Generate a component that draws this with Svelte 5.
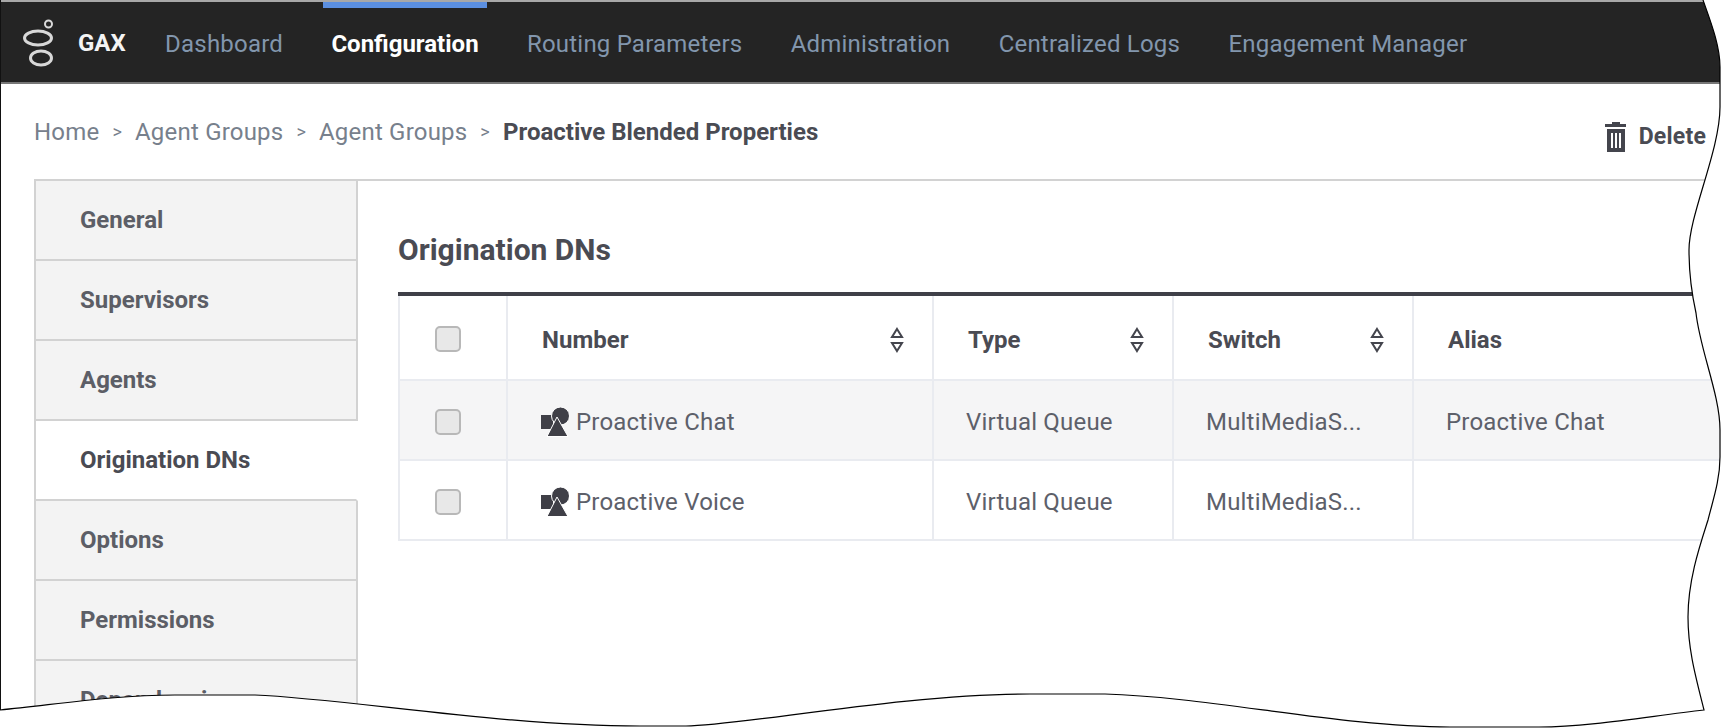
<script>
	const navItems = ['Dashboard', 'Configuration', 'Routing Parameters', 'Administration', 'Centralized Logs', 'Engagement Manager'];
	const tabs = ['General', 'Supervisors', 'Agents', 'Origination DNs', 'Options', 'Permissions', 'Dependencies'];
	const rows = [
		{ name: 'Proactive Chat', type: 'Virtual Queue', sw: 'MultiMediaS...', alias: 'Proactive Chat' },
		{ name: 'Proactive Voice', type: 'Virtual Queue', sw: 'MultiMediaS...', alias: '' },
	];
	const crumbs = ['Home', 'Agent Groups', 'Agent Groups'];

	// torn-paper edge of the screenshot
	const edge = 'M0 710 C60 704 115 695 175 695 L255 695 C350 699 500 726 640 726 L686 726 C740 726 900 694 1030 694 L1105 694 C1210 697 1340 727 1450 727 L1539 727 C1590 727 1650 716 1704 710 C1696 678 1688 650 1688 617 C1688 580 1700 545 1708 520 C1713 500 1720 480 1720 457 L1720 430 C1720 395 1700 350 1696 313 C1692 295 1689 275 1689 250 C1689 215 1720 150 1720 107 L1720 67 C1720 45 1710 20 1703 0';
	const outside = edge + ' L1722 0 L1722 728 L0 728 Z';
</script>

<div class="page">
	<header class="topbar">
		<svg class="logo" width="32" height="48" viewBox="0 0 32 48" fill="none" stroke="#d8d8d8" stroke-width="3">
			<circle cx="25.5" cy="5" r="3.5" stroke-width="2" />
			<ellipse cx="15" cy="19" rx="13.5" ry="7" />
			<ellipse cx="18" cy="39" rx="10.5" ry="7" />
		</svg>
		<span class="brand">GAX</span>
		<nav class="nav">
			{#each navItems as item}
				<a class="nav-item" class:active={item === 'Configuration'}>{item}</a>
			{/each}
		</nav>
	</header>

	<div class="crumb-row">
		<div class="crumbs">
			{#each crumbs as c}
				<span>{c}</span><span class="sep">&gt;</span>
			{/each}
			<b>Proactive Blended Properties</b>
		</div>
		<div class="delete">
			<svg width="22" height="30" viewBox="0 0 22 30">
				<path fill="#44454d" d="M7 0h8v2h6v3H0V2h7zM2 7h18v23H2zM6 11v15h2V11zM10 11v15h2V11zM14 11v15h2V11z" fill-rule="evenodd" />
			</svg>
			<span>Delete</span>
		</div>
	</div>

	<div class="panel">
		<aside class="tabs">
			{#each tabs as t}
				<div class="tab" class:current={t === 'Origination DNs'}>{t}</div>
			{/each}
		</aside>
		<section class="content">
			<h2>Origination DNs</h2>
			<div class="grid head">
				<div class="cell check"><span class="box"></span></div>
				{#each ['Number', 'Type', 'Switch'] as h}
					<div class="cell th">
						{h}
						<svg class="sort" width="14" height="26" viewBox="0 0 14 26" fill="none" stroke="#44454d" stroke-width="2">
							<path d="M7 2L12 10H2Z" /><path d="M7 24L12 16H2Z" />
						</svg>
					</div>
				{/each}
				<div class="cell th">Alias</div>
			</div>
			{#each rows as r, i}
				<div class="grid row" class:odd={i === 0}>
					<div class="cell check"><span class="box"></span></div>
					<div class="cell name">
						<svg width="28" height="30" viewBox="0 0 28 30">
							<rect x="0" y="8" width="12" height="14" fill="#3f3f47" />
							<circle cx="19.5" cy="9" r="9" fill="#3f3f47" stroke="#fff" stroke-width="1" />
							<path d="M16 10L27 29.5H6Z" fill="#3f3f47" stroke="#fff" stroke-width="1" />
						</svg>
						{r.name}
					</div>
					<div class="cell">{r.type}</div>
					<div class="cell">{r.sw}</div>
					<div class="cell">{r.alias}</div>
				</div>
			{/each}
		</section>
	</div>
</div>

<svg class="torn" width="1722" height="728" viewBox="0 0 1722 728">
	<path d={outside} fill="#fff" />
	<path d={edge} fill="none" stroke="#000" stroke-width="1.2" />
</svg>

<style>
	:global(body) {
		margin: 0;
		background: #fff;
	}

	.page {
		width: 1722px;
		height: 728px;
		overflow: hidden;
		box-sizing: border-box;
		border-left: 1px solid #111;
		font-family: Roboto, 'Liberation Sans', sans-serif;
		font-size: 24px;
		letter-spacing: 0.2px;
		color: #555760;
		background: #fff;
	}

	.topbar {
		height: 84px;
		box-sizing: border-box;
		border-top: 2px solid #a8a8a8;
		border-bottom: 2px solid #777;
		background: #242424;
		display: flex;
		align-items: center;
		padding-left: 22px;
	}

	.logo {
		margin-top: 1px;
	}

	.brand {
		margin-left: 23px;
		margin-top: 2px;
		font-weight: 700;
		letter-spacing: 0;
		color: #f4f4f4;
	}

	.nav {
		display: flex;
		align-self: stretch;
		margin-left: 15px;
	}

	.nav-item {
		display: flex;
		align-items: center;
		margin: 0 16px 0 16.4px;
		padding: 0 8px 2px;
		color: #8296ad;
		border-top: 6px solid transparent;
	}

	.nav-item.active {
		color: #fff;
		font-weight: 700;
		letter-spacing: 0;
		border-top-color: #5b8fe0;
	}

	.crumb-row {
		height: 95px;
		box-sizing: border-box;
		display: flex;
		justify-content: space-between;
		align-items: center;
		padding-left: 33px;
	}

	.crumbs {
		display: flex;
		align-items: center;
		color: #77808c;
	}

	.crumbs .sep {
		margin: 0 13px;
		font-size: 18px;
	}

	.crumbs b {
		color: #4a4b53;
		font-weight: 700;
		letter-spacing: 0;
	}

	.delete {
		display: flex;
		align-items: center;
		gap: 12px;
		font-size: 23px;
		font-weight: 700;
		color: #4a4b53;
		margin: 10px 16px 0 0;
		white-space: nowrap;
	}

	.panel {
		display: flex;
		margin-left: 33px;
		border-top: 2px solid #d2d2d2;
	}

	.tabs {
		width: 324px;
		flex: none;
		box-sizing: border-box;
	}

	.tab {
		height: 80px;
		box-sizing: border-box;
		display: flex;
		align-items: center;
		padding-left: 44px;
		font-weight: 700;
		letter-spacing: 0;
		color: #5c5e66;
		background: #f3f3f3;
		border: 2px solid #d2d2d2;
		border-top: 0;
	}

	.tab.current {
		background: #fff;
		color: #4a4b53;
		border-right-color: #fff;
	}

	.content {
		flex: 1;
		padding-left: 40px;
	}

	h2 {
		margin: 0;
		height: 115px;
		box-sizing: border-box;
		padding-top: 51px;
		font-size: 30px;
		line-height: 36px;
		font-weight: 700;
		letter-spacing: 0;
		color: #4a4b53;
		border-bottom: 4px solid #3f4048;
	}

	.grid {
		display: grid;
		box-sizing: border-box;
		grid-template-columns: 108px 426px 240px 240px 1fr;
		border-bottom: 2px solid #e9ebf0;
		border-left: 2px solid #e9ebf0;
	}

	.head {
		height: 85px;
	}

	.row {
		height: 80px;
	}

	.odd {
		background: #f5f5f6;
	}

	.cell {
		display: flex;
		align-items: center;
		padding: 3px 0 0 32px;
		border-right: 2px solid #e9ebf0;
		white-space: nowrap;
		color: #5d606a;
	}

	.cell.check {
		padding-left: 35px;
	}

	.th {
		padding: 4px 0 0 34px;
		font-weight: 700;
		letter-spacing: 0;
		color: #4a4b53;
	}

	.sort {
		margin-left: auto;
		margin-right: 28px;
	}

	.name {
		gap: 7px;
		padding-left: 33px;
	}

	.box {
		width: 22px;
		height: 22px;
		border: 2px solid #b8b8b8;
		border-radius: 5px;
		background: #e8e8e8;
	}

	.torn {
		position: absolute;
		left: 0;
		top: 0;
	}
</style>
